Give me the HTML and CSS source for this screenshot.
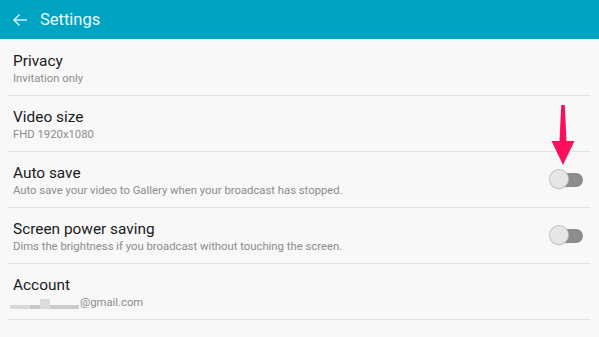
FILE: index.html
```html
<!DOCTYPE html>
<html lang="en">
<head>
  <meta charset="UTF-8">
  <title>Settings</title>
  <link rel="stylesheet" href="styles.css">
</head>
<body>
  <div class="appbar">
    <svg class="back" width="16" height="14" viewBox="0 0 16 14">
      <path d="M15 7H2M7.5 1.5L2 7l5.5 5.5" fill="none" stroke="#c8eef5" stroke-width="1.6"/>
    </svg>
    <span class="appbar-title">Settings</span>
  </div>

  <div class="list">
    <div class="row">
      <div class="text">
        <div class="title">Privacy</div>
        <div class="sub">Invitation only</div>
      </div>
    </div>
    <div class="row">
      <div class="text">
        <div class="title">Video size</div>
        <div class="sub">FHD 1920x1080</div>
      </div>
      <svg class="pointer" width="26" height="62" viewBox="0 0 26 62">
        <path d="M11.2 1L14.8 1L16.5 37L24.5 37L13 61L1.5 37L9.5 37Z" fill="#fc0f5a"/>
      </svg>
    </div>
    <div class="row">
      <div class="text">
        <div class="title">Auto save</div>
        <div class="sub">Auto save your video to Gallery when your broadcast has stopped.</div>
      </div>
      <div class="switch"><span class="knob"></span></div>
    </div>
    <div class="row">
      <div class="text">
        <div class="title">Screen power saving</div>
        <div class="sub">Dims the brightness if you broadcast without touching the screen.</div>
      </div>
      <div class="switch"><span class="knob"></span></div>
    </div>
    <div class="row">
      <div class="text">
        <div class="title">Account</div>
        <div class="sub email">
          <span class="blur"><i class="b1"></i><i class="b2"></i><i class="b3"></i><i class="b4"></i></span>@gmail.com
        </div>
      </div>
    </div>
  </div>
</body>
</html>
```

FILE: styles.css
```css
body {
  margin: 0;
  background: #f8f8f8;
  font-family: Roboto, "Liberation Sans", sans-serif;
}

.appbar {
  height: 39px;
  background: #00a4c3;
  display: flex;
  align-items: center;
  padding-left: 12px;
}

.back {
  margin-right: 12px;
}

.appbar-title {
  color: #eafaff;
  font-size: 16.5px;
}

.list {
  padding: 1px 9px 0 8px;
}

.row {
  position: relative;
  height: 55px;
  border-bottom: 1px solid #e2e2e2;
  display: flex;
  align-items: flex-start;
  justify-content: space-between;
}

.text {
  padding: 11px 0 0 5px;
}

.title {
  font-size: 15.4px;
  line-height: 20px;
  color: #1a1a1a;
}

.sub {
  font-size: 11.3px;
  line-height: 16px;
  color: #8c8c8c;
}

.switch {
  position: relative;
  width: 25px;
  height: 14px;
  background: #8c8c8c;
  border-radius: 7px;
  margin: 21px 7px 0 0;
}

.knob {
  position: absolute;
  left: -8px;
  top: -3px;
  width: 18px;
  height: 18px;
  border-radius: 50%;
  background: #e6e6e6;
  box-shadow: 0 0 0 1px #c4c4c4, 0 1px 2px rgba(0, 0, 0, 0.25);
}

.pointer {
  position: absolute;
  right: 14px;
  top: 8px;
}

.email {
  display: flex;
  align-items: center;
  margin-left: -3px;
}

.blur {
  display: flex;
  align-items: flex-end;
  height: 12px;
  margin-right: 1px;
}

.blur i {
  display: block;
}

.blur .b1 {
  width: 20px;
  height: 4px;
  background: #d9d9d9;
}

.blur .b2 {
  width: 10px;
  height: 4px;
  background: #c7c7c7;
}

.blur .b3 {
  width: 10px;
  height: 10px;
  background: #dcdcdc;
}

.blur .b4 {
  width: 29px;
  height: 4px;
  background: #cbcbcb;
}
```
